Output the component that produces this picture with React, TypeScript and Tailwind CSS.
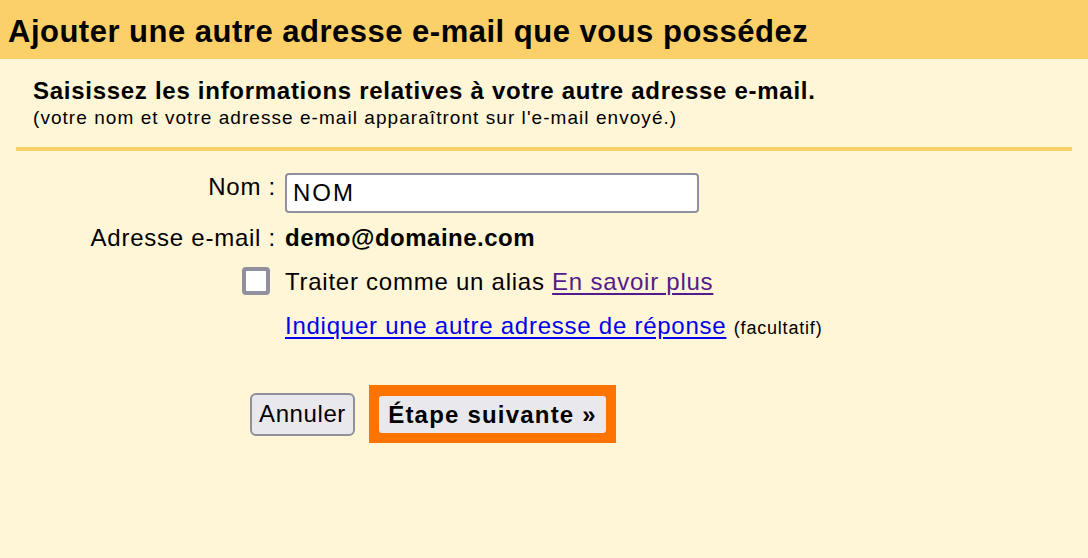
export default function App() {
  return (
    <div className="w-[1088px] h-[558px] bg-[#fff5d7] font-['Liberation_Sans',Arial,sans-serif] text-black overflow-hidden">
      <div className="h-[59px] bg-[#fcd068] pl-[8px] pt-[14px]">
        <h1 className="text-[31px] leading-[36px] font-bold tracking-[0.5px] whitespace-nowrap">
          Ajouter une autre adresse e-mail que vous possédez
        </h1>
      </div>

      <div className="px-[33px] pt-[19px]">
        <p className="text-[24px] leading-[26px] font-bold tracking-[0.72px] whitespace-nowrap">
          Saisissez les informations relatives à votre autre adresse e-mail.
        </p>
        <p className="text-[19px] leading-[22px] mt-[3px] tracking-[1.05px] whitespace-nowrap">
          (votre nom et votre adresse e-mail apparaîtront sur l'e-mail envoyé.)
        </p>
      </div>

      <div className="mx-[16px] mt-[18px] h-[4px] bg-[#fcd068]" />

      <div className="grid grid-cols-[285px_1fr] text-[24px] tracking-[0.75px] mt-[22px]">
        <label className="self-start text-right pr-[9px] leading-[28px]">Nom :</label>
        <input
          defaultValue="NOM"
          className="w-[414px] h-[40px] bg-white border-2 border-[#8f8f9d] rounded-[4px] px-[6px] text-[24px] tracking-[2px] outline-none"
        />

        <span className="text-right pr-[9px] mt-[10px] leading-[30px] whitespace-nowrap">Adresse e-mail :</span>
        <span className="font-bold mt-[10px] leading-[30px] tracking-[0.5px]">demo@domaine.com</span>

        <span className="flex justify-end pr-[15px] mt-[14px]">
          <span className="w-[28px] h-[28px] border-4 border-[#8f8f9d] rounded-[4px] bg-white" />
        </span>
        <span className="mt-[14px] leading-[30px] whitespace-nowrap">
          Traiter comme un alias{" "}
          <a href="#" className="text-[#551a8b] underline underline-offset-[3px]">En savoir plus</a>
        </span>

        <span />
        <span className="mt-[14px] leading-[30px] whitespace-nowrap">
          <a href="#" className="text-[#0000ee] underline underline-offset-[3px]">Indiquer une autre adresse de réponse</a>{" "}
          <span className="text-[18px] tracking-[0.8px]">(facultatif)</span>
        </span>
      </div>

      <div className="flex items-center pl-[250px] mt-[42px] gap-[14px]">
        <button className="w-[105px] h-[43px] text-[24px] tracking-[0.6px] bg-[#e9e9ed] border-2 border-[#8f8f9d] rounded-[6px]">
          Annuler
        </button>
        <div className="pt-[11px] pb-[10px] px-[10px] bg-[#ff7300]">
          <button className="w-[227px] h-[37px] text-[24px] tracking-[1.2px] font-bold bg-[#e9e9ed] rounded-[3px] whitespace-nowrap">
            Étape suivante »
          </button>
        </div>
      </div>
    </div>
  );
}
